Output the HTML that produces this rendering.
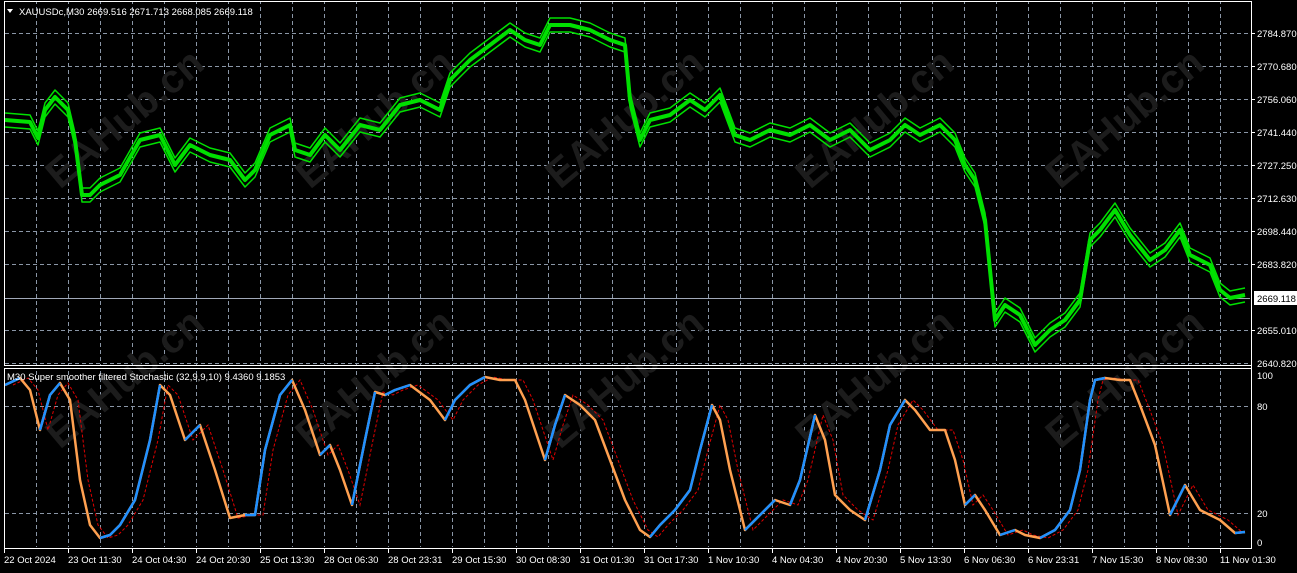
<!DOCTYPE html><html><head><style>
body{margin:0;background:#000;width:1297px;height:573px;overflow:hidden}
svg{display:block;font-family:"Liberation Sans",sans-serif}
</style></head><body>
<svg width="1297" height="573" viewBox="0 0 1297 573">
<defs>
<pattern id="vg" x="36" y="0" width="32" height="600" patternUnits="userSpaceOnUse">
<line x1="0.5" y1="0" x2="0.5" y2="600" stroke="#8a96a6" stroke-dasharray="4,3"/>
</pattern>
</defs>
<rect width="1297" height="573" fill="#000"/>
<rect x="5" y="2" width="1245" height="363" fill="url(#vg)"/>
<rect x="5" y="369" width="1245" height="178" fill="url(#vg)"/>
<g stroke="#8a96a6" stroke-dasharray="4,3">
<line x1="5" y1="33.5" x2="1250" y2="33.5"/><line x1="5" y1="66.5" x2="1250" y2="66.5"/>
<line x1="5" y1="99.5" x2="1250" y2="99.5"/><line x1="5" y1="132.5" x2="1250" y2="132.5"/>
<line x1="5" y1="165.5" x2="1250" y2="165.5"/><line x1="5" y1="198.5" x2="1250" y2="198.5"/>
<line x1="5" y1="231.5" x2="1250" y2="231.5"/><line x1="5" y1="264.5" x2="1250" y2="264.5"/>
<line x1="5" y1="330.5" x2="1250" y2="330.5"/><line x1="5" y1="363.5" x2="1250" y2="363.5"/>
<line x1="5" y1="406.5" x2="1250" y2="406.5"/><line x1="5" y1="513.5" x2="1250" y2="513.5"/>
</g>
<line x1="5" y1="298.5" x2="1250" y2="298.5" stroke="#a0a8b8"/>
<g fill="#1c1c1c" font-size="40" font-weight="bold">
<text transform="translate(60,190) rotate(-40)">EAHub.cn</text>
<text transform="translate(310,190) rotate(-40)">EAHub.cn</text>
<text transform="translate(560,190) rotate(-40)">EAHub.cn</text>
<text transform="translate(810,190) rotate(-40)">EAHub.cn</text>
<text transform="translate(1060,190) rotate(-40)">EAHub.cn</text>
<text transform="translate(60,450) rotate(-40)">EAHub.cn</text>
<text transform="translate(310,450) rotate(-40)">EAHub.cn</text>
<text transform="translate(560,450) rotate(-40)">EAHub.cn</text>
<text transform="translate(810,450) rotate(-40)">EAHub.cn</text>
<text transform="translate(1060,450) rotate(-40)">EAHub.cn</text>
</g>
<g fill="none" stroke="#00e000" stroke-linejoin="round">
<polyline stroke-width="4" points="5,120 30,122 38,138 45,110 55,97 68,110 75,140 82,195 90,195 100,185 120,175 140,140 160,135 175,165 190,145 210,155 230,160 245,180 255,170 270,135 290,125 295,150 310,155 325,135 340,150 360,125 380,130 400,105 420,100 440,110 450,80 470,60 490,45 510,30 525,40 540,45 550,25 570,25 590,30 610,40 625,45 630,100 640,140 650,120 670,115 690,100 705,110 720,95 735,135 750,140 770,130 790,135 810,125 830,140 850,130 870,150 890,140 905,125 920,135 940,125 955,140 965,165 975,180 985,220 995,320 1005,305 1020,315 1035,345 1050,330 1065,320 1080,300 1090,240 1100,230 1115,210 1130,235 1150,260 1165,250 1180,230 1190,255 1210,265 1220,290 1230,298 1245,295"/>
<polyline stroke-width="1.5" transform="translate(0,-7)" points="5,120 30,122 38,138 45,110 55,97 68,110 75,140 82,195 90,195 100,185 120,175 140,140 160,135 175,165 190,145 210,155 230,160 245,180 255,170 270,135 290,125 295,150 310,155 325,135 340,150 360,125 380,130 400,105 420,100 440,110 450,80 470,60 490,45 510,30 525,40 540,45 550,25 570,25 590,30 610,40 625,45 630,100 640,140 650,120 670,115 690,100 705,110 720,95 735,135 750,140 770,130 790,135 810,125 830,140 850,130 870,150 890,140 905,125 920,135 940,125 955,140 965,165 975,180 985,220 995,320 1005,305 1020,315 1035,345 1050,330 1065,320 1080,300 1090,240 1100,230 1115,210 1130,235 1150,260 1165,250 1180,230 1190,255 1210,265 1220,290 1230,298 1245,295"/>
<polyline stroke-width="1.5" transform="translate(0,7)" points="5,120 30,122 38,138 45,110 55,97 68,110 75,140 82,195 90,195 100,185 120,175 140,140 160,135 175,165 190,145 210,155 230,160 245,180 255,170 270,135 290,125 295,150 310,155 325,135 340,150 360,125 380,130 400,105 420,100 440,110 450,80 470,60 490,45 510,30 525,40 540,45 550,25 570,25 590,30 610,40 625,45 630,100 640,140 650,120 670,115 690,100 705,110 720,95 735,135 750,140 770,130 790,135 810,125 830,140 850,130 870,150 890,140 905,125 920,135 940,125 955,140 965,165 975,180 985,220 995,320 1005,305 1020,315 1035,345 1050,330 1065,320 1080,300 1090,240 1100,230 1115,210 1130,235 1150,260 1165,250 1180,230 1190,255 1210,265 1220,290 1230,298 1245,295"/>
</g>
<polyline fill="none" stroke="#e00000" stroke-dasharray="3,2" points="13,385 28,378 38,390 48,430 58,395 68,383 78,400 88,480 98,525 108,538 118,535 128,525 143,500 158,440 168,385 178,395 193,440 208,425 223,470 238,518 253,515 263,515 273,450 288,395 300,380 313,410 328,455 338,445 348,470 360,505 373,440 383,392 393,395 403,390 418,385 438,400 453,420 463,400 478,385 493,377 508,380 523,380 533,400 543,430 553,460 563,425 573,395 588,405 603,420 618,460 633,500 648,530 658,537 668,525 683,510 698,490 708,450 720,405 728,420 738,470 753,530 768,515 783,500 798,505 808,480 823,415 833,440 843,495 858,510 873,520 888,470 898,425 913,400 923,410 938,430 953,430 963,460 973,505 983,495 993,510 1008,535 1023,530 1033,535 1048,538 1063,530 1078,510 1088,470 1098,400 1103,380 1113,378 1128,380 1138,380 1148,405 1163,445 1178,515 1193,485 1208,510 1228,520 1243,533"/>
<polyline fill="none" stroke="#ffa050" stroke-width="2.5" stroke-linejoin="round" points="5,385 20,378 30,390 40,430 50,395 60,383 70,400 80,480 90,525 100,538 110,535 120,525 135,500 150,440 160,385 170,395 185,440 200,425 215,470 230,518 245,515 255,515 265,450 280,395 292,380 305,410 320,455 330,445 340,470 352,505 365,440 375,392 385,395 395,390 410,385 430,400 445,420 455,400 470,385 485,377 500,380 515,380 525,400 535,430 545,460 555,425 565,395 580,405 595,420 610,460 625,500 640,530 650,537 660,525 675,510 690,490 700,450 712,405 720,420 730,470 745,530 760,515 775,500 790,505 800,480 815,415 825,440 835,495 850,510 865,520 880,470 890,425 905,400 915,410 930,430 945,430 955,460 965,505 975,495 985,510 1000,535 1015,530 1025,535 1040,538 1055,530 1070,510 1080,470 1090,400 1095,380 1105,378 1120,380 1130,380 1140,405 1155,445 1170,515 1185,485 1200,510 1220,520 1235,533 1245,532"/>
<g fill="none" stroke="#2090ff" stroke-width="2.5" stroke-linejoin="round">
<polyline points="5,385 20,378"/><polyline points="40,430 50,395 60,383"/>
<polyline points="100,538 110,535 120,525 135,500 150,440 160,385"/>
<polyline points="185,440 200,425"/><polyline points="245,515 255,515 265,450 280,395 292,380"/>
<polyline points="320,455 330,445"/><polyline points="352,505 365,440 375,392"/><polyline points="385,395 395,390 410,385"/>
<polyline points="445,420 455,400 470,385 485,377"/><polyline points="545,460 555,425 565,395"/>
<polyline points="650,537 660,525 675,510 690,490 700,450 712,405"/><polyline points="745,530 760,515 775,500"/>
<polyline points="790,505 800,480 815,415"/><polyline points="865,520 880,470 890,425 905,400"/>
<polyline points="965,505 975,495"/><polyline points="1000,535 1015,530"/>
<polyline points="1040,538 1055,530 1070,510 1080,470 1090,400 1095,380 1105,378"/>
<polyline points="1170,515 1185,485"/><polyline points="1235,533 1245,532"/>
</g>
<g stroke="#fff" fill="none">
<rect x="4.5" y="1.5" width="1247" height="364"/>
<rect x="4.5" y="368.5" width="1247" height="180"/>
</g>
<rect x="0" y="549" width="1297" height="24" fill="#000"/>
<rect x="1252" y="0" width="45" height="573" fill="#000"/>
<line x1="1251.5" y1="1" x2="1251.5" y2="549" stroke="#fff"/>
<polygon points="7,9 13,9 10,13" fill="#fff"/>
<text x="19" y="15" font-size="9.5" fill="#fff">XAUUSDc,M30  2669.516 2671.713 2668.085 2669.118</text>
<text x="7" y="380" font-size="9.5" fill="#fff">M30 Super smoother filtered Stochastic (32,9,9,10) 9.4360 9.1853</text>
<g font-size="9.5" fill="#fff">
<text x="1257" y="37">2784.870</text><text x="1257" y="70">2770.680</text><text x="1257" y="103">2756.060</text>
<text x="1257" y="136">2741.440</text><text x="1257" y="169">2727.250</text><text x="1257" y="202">2712.630</text>
<text x="1257" y="235">2698.440</text><text x="1257" y="268">2683.820</text>
<text x="1257" y="334">2655.010</text><text x="1257" y="367">2640.820</text>
<text x="1257" y="379">100</text><text x="1257" y="410">80</text><text x="1257" y="517">20</text><text x="1257" y="546">0</text>
</g>
<g stroke="#fff"><line x1="1252" y1="33.5" x2="1255" y2="33.5"/><line x1="1252" y1="66.5" x2="1255" y2="66.5"/><line x1="1252" y1="99.5" x2="1255" y2="99.5"/><line x1="1252" y1="132.5" x2="1255" y2="132.5"/><line x1="1252" y1="165.5" x2="1255" y2="165.5"/><line x1="1252" y1="198.5" x2="1255" y2="198.5"/><line x1="1252" y1="231.5" x2="1255" y2="231.5"/><line x1="1252" y1="264.5" x2="1255" y2="264.5"/><line x1="1252" y1="330.5" x2="1255" y2="330.5"/></g>
<rect x="1254" y="291" width="43" height="14" fill="#fff"/>
<text x="1257" y="302" font-size="9.5" fill="#000">2669.118</text>
<g stroke="#fff">
<line x1="4.5" y1="549" x2="4.5" y2="553"/><line x1="68.5" y1="549" x2="68.5" y2="553"/><line x1="132.5" y1="549" x2="132.5" y2="553"/><line x1="196.5" y1="549" x2="196.5" y2="553"/><line x1="260.5" y1="549" x2="260.5" y2="553"/><line x1="324.5" y1="549" x2="324.5" y2="553"/><line x1="388.5" y1="549" x2="388.5" y2="553"/><line x1="452.5" y1="549" x2="452.5" y2="553"/><line x1="516.5" y1="549" x2="516.5" y2="553"/><line x1="580.5" y1="549" x2="580.5" y2="553"/><line x1="644.5" y1="549" x2="644.5" y2="553"/><line x1="708.5" y1="549" x2="708.5" y2="553"/><line x1="772.5" y1="549" x2="772.5" y2="553"/><line x1="836.5" y1="549" x2="836.5" y2="553"/><line x1="900.5" y1="549" x2="900.5" y2="553"/><line x1="964.5" y1="549" x2="964.5" y2="553"/><line x1="1028.5" y1="549" x2="1028.5" y2="553"/><line x1="1092.5" y1="549" x2="1092.5" y2="553"/><line x1="1156.5" y1="549" x2="1156.5" y2="553"/><line x1="1220.5" y1="549" x2="1220.5" y2="553"/>
</g>
<g font-size="9.5" fill="#fff">
<text x="4" y="563">22 Oct 2024</text><text x="68" y="563">23 Oct 11:30</text><text x="132" y="563">24 Oct 04:30</text>
<text x="196" y="563">24 Oct 20:30</text><text x="260" y="563">25 Oct 13:30</text><text x="324" y="563">28 Oct 06:30</text>
<text x="388" y="563">28 Oct 23:31</text><text x="452" y="563">29 Oct 15:30</text><text x="516" y="563">30 Oct 08:30</text>
<text x="580" y="563">31 Oct 01:30</text><text x="644" y="563">31 Oct 17:30</text><text x="708" y="563">1 Nov 10:30</text>
<text x="772" y="563">4 Nov 04:30</text><text x="836" y="563">4 Nov 20:30</text><text x="900" y="563">5 Nov 13:30</text>
<text x="964" y="563">6 Nov 06:30</text><text x="1028" y="563">6 Nov 23:31</text><text x="1092" y="563">7 Nov 15:30</text>
<text x="1156" y="563">8 Nov 08:30</text><text x="1220" y="563">11 Nov 01:30</text>
</g>
</svg>
</body></html>
